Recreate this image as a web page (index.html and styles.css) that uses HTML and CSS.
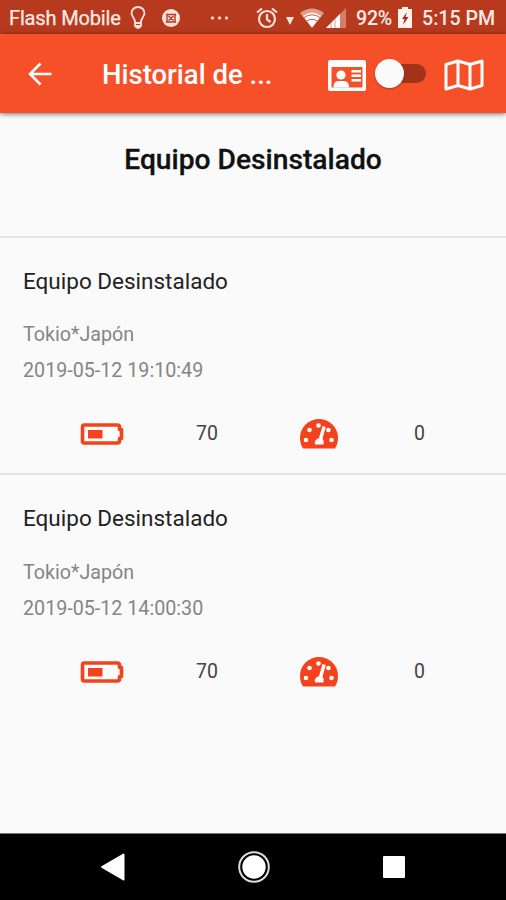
FILE: index.html
```html
<!DOCTYPE html>
<html lang="es">
<head>
<meta charset="utf-8">
<title>Historial</title>
<link rel="stylesheet" href="styles.css">
</head>
<body>
<svg width="0" height="0" class="defs">
  <symbol id="battery" viewBox="0 0 44 22">
    <path d="M4 2H37.500Q39.500 2 39.500 4V6.500H41.500V15.500H39.500V18Q39.500 20 37.500 20H4Q2.500 20 2.500 18V4Q2.500 2 4 2Z" fill="#fff" stroke="#f4431c" stroke-width="3.600" stroke-linejoin="round"/>
    <path d="M8 7H22.500V15.500H8Z" fill="#f4431c"/>
  </symbol>
  <symbol id="gauge" viewBox="0 0 40 32">
    <path d="M4 30.500Q1 26 1 19.500A19 18.500 0 0 1 39 19.500Q39 26 36 30.500Z" fill="#f4431c"/>
    <g fill="#fff"><circle cx="7" cy="22" r="2.300"/><circle cx="10.500" cy="12" r="2.300"/><circle cx="19.500" cy="7.500" r="2.300"/><circle cx="29.500" cy="12" r="2.300"/><circle cx="32.500" cy="22" r="2.300"/><path d="M23.500 8L26.800 9L23.500 20.500Q25.500 23 24.500 26.500H16Q14.500 22 20 20Z"/></g>
  </symbol>
</svg>
<div class="screen">
  <div class="status">
    <span class="carrier">Flash Mobile</span>
    <svg class="bulb" width="16" height="24" viewBox="0 0 16 24" fill="none" stroke="#fbe3dc" stroke-width="1.800"><path d="M5 16C5 12 1.500 11 1.500 7A6.500 6 0 0 1 14.500 7C14.500 11 11 12 11 16V20Q8 24 5 20ZM5 17H11M5 20H11"/></svg>
    <svg class="disc" width="18" height="18" viewBox="0 0 18 18"><circle cx="9" cy="9" r="9" fill="#fbe3dc"/><path d="M4 5.500H14M4 13H14M5 5.500V13M13 5.500V13M6.500 7L11.500 11.500M11.500 7L6.500 11.500" fill="none" stroke="#b93a20" stroke-width="1.400"/></svg>
    <svg class="dots" width="20" height="4" viewBox="0 0 20 4" fill="#f4c9be"><circle cx="2.500" cy="2" r="1.700"/><circle cx="9.500" cy="2" r="1.700"/><circle cx="16.500" cy="2" r="1.700"/></svg>
    <svg class="alarm" width="22" height="22" viewBox="0 0 22 22" fill="none" stroke="#fbe3dc" stroke-width="2.200"><circle cx="11" cy="12" r="8"/><path d="M11 7V12.500L14.500 15M1 5.500L6 1.500M21 5.500L16 1.500"/></svg>
    <svg class="caret" width="8" height="8" viewBox="0 0 8 8"><path d="M0 0H8L4 8Z" fill="#fbe3dc"/></svg>
    <svg class="wifi" width="24" height="20" viewBox="0 0 24 20"><path d="M0 5Q12-4 24 5L12 20Z" fill="#e09b8b"/><path d="M3 8Q12 1 21 8L12 19.500Z" fill="#fff"/><path d="M4 9.500Q12 4 20 9.500M7 13Q12 9.500 17 13" fill="none" stroke="#c65b43" stroke-width="1"/></svg>
    <svg class="signal" width="20" height="20" viewBox="0 0 20 20"><path d="M0 20L20 0V20Z" fill="#d77c68"/><path d="M0 20L14 6V20Z" fill="#fff"/><path d="M5 14V20M9 10V20" stroke="#d77c68" stroke-width=".8"/></svg>
    <span class="percent">92%</span>
    <svg class="charge" width="14" height="21" viewBox="0 0 14 21"><path d="M0 2H4V0H10V2H14V21H0Z" fill="#fff3ef"/><path d="M9 5L4 12H6.500L5 18L10.500 10H7.500Z" fill="#a52c16"/></svg>
    <span class="clock">5:15 PM</span>
  </div>
  <header class="bar">
    <svg class="back" width="24" height="24" viewBox="0 0 24 24" fill="none" stroke="#fff" stroke-width="2.600"><path d="M12.500 1.500L2 12L12.500 22.500M2 12H23.500"/></svg>
    <h1 class="title">Historial de ...</h1>
    <svg class="card" width="38" height="31" viewBox="0 0 38 31"><path d="M2 0H36Q38 0 38 2V29Q38 31 36 31H2Q0 31 0 29V2Q0 0 2 0ZM3.500 7V27.500H34.500V7Z" fill="#fff" fill-rule="evenodd"/><circle cx="13" cy="15" r="4.600" fill="#fff"/><path d="M5.500 27.500Q5.500 21 10 21H16Q21 21 21 27.500ZM23.500 10H33V12.500H23.500ZM23.500 14.500H33V17H23.500ZM23.500 19H33V21.500H23.500Z" fill="#fff"/></svg>
    <div class="toggle"><span class="knob"></span></div>
    <svg class="map" width="40" height="32" viewBox="0 0 40 32" fill="none" stroke="#fff" stroke-width="3" stroke-linejoin="round"><path d="M2 5.500L14 2L26 5.500L38 2V26.500L26 30L14 26.500L2 30ZM14 2V26.500M26 5.500V30"/></svg>
  </header>
  <main class="content">
    <section class="summary"><h2>Equipo Desinstalado</h2></section>
    <article class="record">
      <h3>Equipo Desinstalado</h3>
      <p class="place">Tokio*Japón</p>
      <p class="date">2019-05-12 19:10:49</p>
      <div class="stats"><svg class="battery"><use href="#battery"/></svg><span class="level">70</span><svg class="gauge"><use href="#gauge"/></svg><span class="speed">0</span></div>
    </article>
    <article class="record">
      <h3>Equipo Desinstalado</h3>
      <p class="place">Tokio*Japón</p>
      <p class="date">2019-05-12 14:00:30</p>
      <div class="stats"><svg class="battery"><use href="#battery"/></svg><span class="level">70</span><svg class="gauge"><use href="#gauge"/></svg><span class="speed">0</span></div>
    </article>
  </main>
  <nav class="nav">
    <svg width="26" height="30" viewBox="0 0 26 30"><path d="M2 15L23.500 2.500V27.500Z" fill="#fff" stroke="#fff" stroke-width="2" stroke-linejoin="round"/></svg>
    <svg width="32" height="32" viewBox="0 0 32 32"><circle cx="16" cy="16" r="14.800" fill="none" stroke="#ddd" stroke-width="2"/><circle cx="16" cy="16" r="11.700" fill="#fff"/></svg>
    <svg width="22" height="22" viewBox="0 0 22 22"><rect width="22" height="22" rx="1" fill="#fff"/></svg>
  </nav>
</div>
</body>
</html>
```

FILE: styles.css
```css
* { box-sizing: border-box; }
body { margin: 0; font-family: Roboto, sans-serif; background: #fafafa; }
h1, h2, h3, p { margin: 0; white-space: nowrap; }
svg { display: block; flex: none; }
.defs { position: absolute; }
.screen { width: 506px; height: 900px; display: flex; flex-direction: column; overflow: hidden; }
.status { height: 34px; flex: none; display: flex; align-items: center; background: #b73a1e; color: #fdeae5; font-size: 20px; line-height: 34px; padding-top: 1px; white-space: nowrap; }
.carrier { width: 112px; margin-left: 9px; letter-spacing: -.15px; -webkit-text-stroke: .25px #fdeae5; }
.bulb { margin-left: 9px; }
.disc { margin-left: 16px; }
.dots { margin-left: 30px; }
.alarm { margin-left: 26px; }
.caret { margin-left: 8px; margin-top: 7px; }
.wifi { margin-left: 6px; }
.signal { margin-left: 2px; }
.percent { width: 38px; margin-left: 10px; padding-top: 2px; font-weight: 500; font-size: 19.600px; letter-spacing: -.2px; }
.charge { margin-left: 4px; }
.clock { margin-left: 10px; padding-top: 2px; font-weight: 500; font-size: 19.600px; }
.bar { height: 79px; flex: none; display: flex; align-items: center; background: #f65029; color: #fff; box-shadow: 0 1px 5px rgba(0, 0, 0, .55); z-index: 1; padding-bottom: 1px; }
.back { margin-left: 28px; margin-top: 1px; }
.title { width: 172px; margin-left: 50px; font-size: 27.500px; font-weight: 500; line-height: 36px; padding-top: 4px; }
.card { margin-left: 54px; margin-top: 4px; }
.toggle { display: flex; align-items: center; width: 43px; height: 19px; margin-left: 17px; margin-top: 1px; border-radius: 10px; background: #a03319; }
.knob { flex: none; width: 29px; height: 29px; margin-left: -8px; border-radius: 50%; background: #fafafa; box-shadow: 0 1px 2px rgba(90, 10, 0, .4); }
.map { margin-left: 18px; margin-top: 3px; }
.content { flex: 1; }
.summary { height: 123px; padding-top: 29px; text-align: center; }
.summary h2 { font-size: 28.200px; line-height: 36px; font-weight: 500; color: #111; -webkit-text-stroke: .3px #111; }
.record { height: 237px; border-top: 2px solid #e4e4e4; padding: 29px 23px 0; }
.record h3 { font-size: 22.500px; line-height: 28px; font-weight: 400; color: #222; }
.record p { font-size: 19.700px; color: #858585; line-height: 28px; }
.record .place { margin-top: 26px; }
.record + .record .place { margin-top: 27px; }
.record .date { margin-top: 8px; }
.stats { display: flex; align-items: center; height: 32px; margin-top: 33px; font-size: 19.500px; color: #444; }
.battery { width: 44px; height: 22px; margin-left: 57px; }
.level { width: 24px; margin: -2px 0 0 72px; }
.gauge { width: 40px; height: 32px; margin-left: 79px; }
.speed { margin: -2px 0 0 75px; }
.nav { height: 67px; flex: none; display: flex; align-items: center; background: #000; border-top: 1px solid #777; }
.nav svg:nth-child(1) { margin-left: 100px; }
.nav svg:nth-child(2) { margin-left: 112px; }
.nav svg:nth-child(3) { margin-left: 113px; }
```
